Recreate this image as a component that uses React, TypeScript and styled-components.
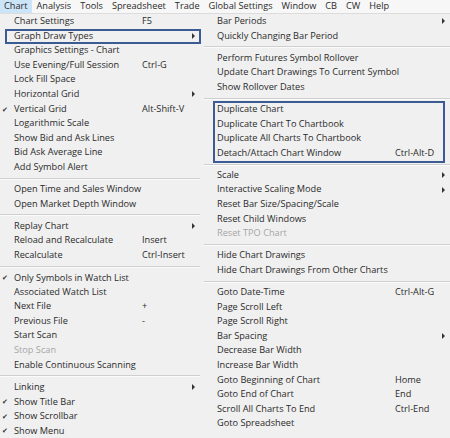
import React from "react";
import styled, { createGlobalStyle } from "styled-components";

const GlobalStyle = createGlobalStyle`
  html, body {
    margin: 0;
    padding: 0;
    background: #f0f0f0;
  }
  body {
    font-family: "Open Sans", "Noto Sans", sans-serif;
    font-size: 9.2px;
    color: #2a2a2a;
  }
`;

type Item =
  | { sep: true }
  | {
      sep?: false;
      label: string;
      shortcut?: string;
      arrow?: boolean;
      check?: boolean;
      disabled?: boolean;
      boxed?: boolean;
    };

const leftItems: Item[] = [
  { label: "Chart Settings", shortcut: "F5" },
  { label: "Graph Draw Types", arrow: true, boxed: true },
  { label: "Graphics Settings - Chart" },
  { label: "Use Evening/Full Session", shortcut: "Ctrl-G" },
  { label: "Lock Fill Space" },
  { label: "Horizontal Grid", arrow: true },
  { label: "Vertical Grid", shortcut: "Alt-Shift-V", check: true },
  { label: "Logarithmic Scale" },
  { label: "Show Bid and Ask Lines" },
  { label: "Bid Ask Average Line" },
  { label: "Add Symbol Alert" },
  { sep: true },
  { label: "Open Time and Sales Window" },
  { label: "Open Market Depth Window" },
  { sep: true },
  { label: "Replay Chart", arrow: true },
  { label: "Reload and Recalculate", shortcut: "Insert" },
  { label: "Recalculate", shortcut: "Ctrl-Insert" },
  { sep: true },
  { label: "Only Symbols in Watch List", check: true },
  { label: "Associated Watch List" },
  { label: "Next File", shortcut: "+" },
  { label: "Previous File", shortcut: "-" },
  { label: "Start Scan" },
  { label: "Stop Scan", disabled: true },
  { label: "Enable Continuous Scanning" },
  { sep: true },
  { label: "Linking", arrow: true },
  { label: "Show Title Bar", check: true },
  { label: "Show Scrollbar", check: true },
  { label: "Show Menu", check: true },
];

const rightTop: Item[] = [
  { label: "Bar Periods", arrow: true },
  { label: "Quickly Changing Bar Period" },
  { sep: true },
  { label: "Perform Futures Symbol Rollover" },
  { label: "Update Chart Drawings To Current Symbol" },
  { label: "Show Rollover Dates" },
  { sep: true },
];

const rightGroup: Item[] = [
  { label: "Duplicate Chart" },
  { label: "Duplicate Chart To Chartbook" },
  { label: "Duplicate All Charts To Chartbook" },
  { label: "Detach/Attach Chart Window", shortcut: "Ctrl-Alt-D" },
];

const rightBottom: Item[] = [
  { sep: true },
  { label: "Scale", arrow: true },
  { label: "Interactive Scaling Mode", arrow: true },
  { label: "Reset Bar Size/Spacing/Scale" },
  { label: "Reset Child Windows" },
  { label: "Reset TPO Chart", disabled: true },
  { sep: true },
  { label: "Hide Chart Drawings" },
  { label: "Hide Chart Drawings From Other Charts" },
  { sep: true },
  { label: "Goto Date-Time", shortcut: "Ctrl-Alt-G" },
  { label: "Page Scroll Left" },
  { label: "Page Scroll Right" },
  { label: "Bar Spacing", arrow: true },
  { label: "Decrease Bar Width" },
  { label: "Increase Bar Width" },
  { label: "Goto Beginning of Chart", shortcut: "Home" },
  { label: "Goto End of Chart", shortcut: "End" },
  { label: "Scroll All Charts To End", shortcut: "Ctrl-End" },
  { label: "Goto Spreadsheet" },
];

const menus = ["Chart", "Analysis", "Tools", "Spreadsheet", "Trade", "Global Settings", "Window", "CB", "CW", "Help"];

const MenuBar = styled.div`
  display: flex;
  height: 13px;
  background: #f7f7f7;
  border-bottom: 1px solid #dcdcdc;
`;

const MenuTitle = styled.div<{ $active?: boolean }>`
  padding: 0 4.5px;
  line-height: 12px;
  background: ${(p) => (p.$active ? "#cce4f7" : "transparent")};
  &:first-child {
    padding-left: 4px;
  }
`;

const Body = styled.div`
  display: grid;
  grid-template-columns: 200px 1fr;
  column-gap: 4px;
`;

const Column = styled.div<{ $shortcutX: number; $pad: number; $arrowX: number }>`
  display: flex;
  flex-direction: column;
  --shortcut-x: ${(p) => p.$shortcutX}px;
  --pad: ${(p) => p.$pad}px;
  --arrow-x: ${(p) => p.$arrowX}px;
`;

const Row = styled.div<{ $disabled?: boolean; $boxed?: boolean }>`
  position: relative;
  display: grid;
  grid-template-columns: var(--pad) calc(var(--shortcut-x) - var(--pad)) calc(var(--arrow-x) - var(--shortcut-x)) 1fr;
  align-items: center;
  height: 14.6px;
  line-height: 14.6px;
  white-space: nowrap;
  color: ${(p) => (p.$disabled ? "#a6a6a6" : "#2a2a2a")};
  ${(p) =>
    p.$boxed &&
    `
    &::after {
      content: "";
      position: absolute;
      left: 5px;
      right: -1px;
      top: 0px;
      bottom: -1px;
      border: 2px solid #3c5a93;
    }
  `}
`;

const Check = styled.span`
  font-size: 7px;
  padding-left: 2px;
  color: #333;
`;

const ArrowCell = styled.span`
  display: flex;
  align-items: center;
`;

const Arrow = styled.span`
  display: block;
  width: 0;
  height: 0;
  border-left: 3px solid #333;
  border-top: 3px solid transparent;
  border-bottom: 3px solid transparent;
`;

const Separator = styled.div`
  height: 7.5px;
  display: flex;
  align-items: center;
  &::before {
    content: "";
    flex: 1;
    height: 1px;
    background: #cfcfcf;
    box-shadow: 0 1px 0 #fbfbfb;
  }
`;

const Group = styled.div`
  position: relative;
  display: flex;
  flex-direction: column;
  &::after {
    content: "";
    position: absolute;
    left: 9px;
    right: 5px;
    top: -1px;
    bottom: -3px;
    border: 2px solid #3c5a93;
  }
`;

const renderItems = (items: Item[]) =>
  items.map((it, i) =>
    it.sep ? (
      <Separator key={i} />
    ) : (
      <Row key={i} $disabled={it.disabled} $boxed={it.boxed}>
        <span>{it.check ? <Check>✔</Check> : null}</span>
        <span>{it.label}</span>
        <span>{it.shortcut}</span>
        <ArrowCell>{it.arrow ? <Arrow /> : null}</ArrowCell>
      </Row>
    )
  );

export default function App() {
  return (
    <>
      <GlobalStyle />
      <MenuBar>
        {menus.map((m, i) => (
          <MenuTitle key={m} $active={i === 0}>
            {m}
          </MenuTitle>
        ))}
      </MenuBar>
      <Body>
        <Column $pad={14} $shortcutX={142} $arrowX={192}>
          {renderItems(leftItems)}
        </Column>
        <Column $pad={13} $shortcutX={191} $arrowX={238}>
          {renderItems(rightTop)}
          <Group>{renderItems(rightGroup)}</Group>
          {renderItems(rightBottom)}
        </Column>
      </Body>
    </>
  );
}
